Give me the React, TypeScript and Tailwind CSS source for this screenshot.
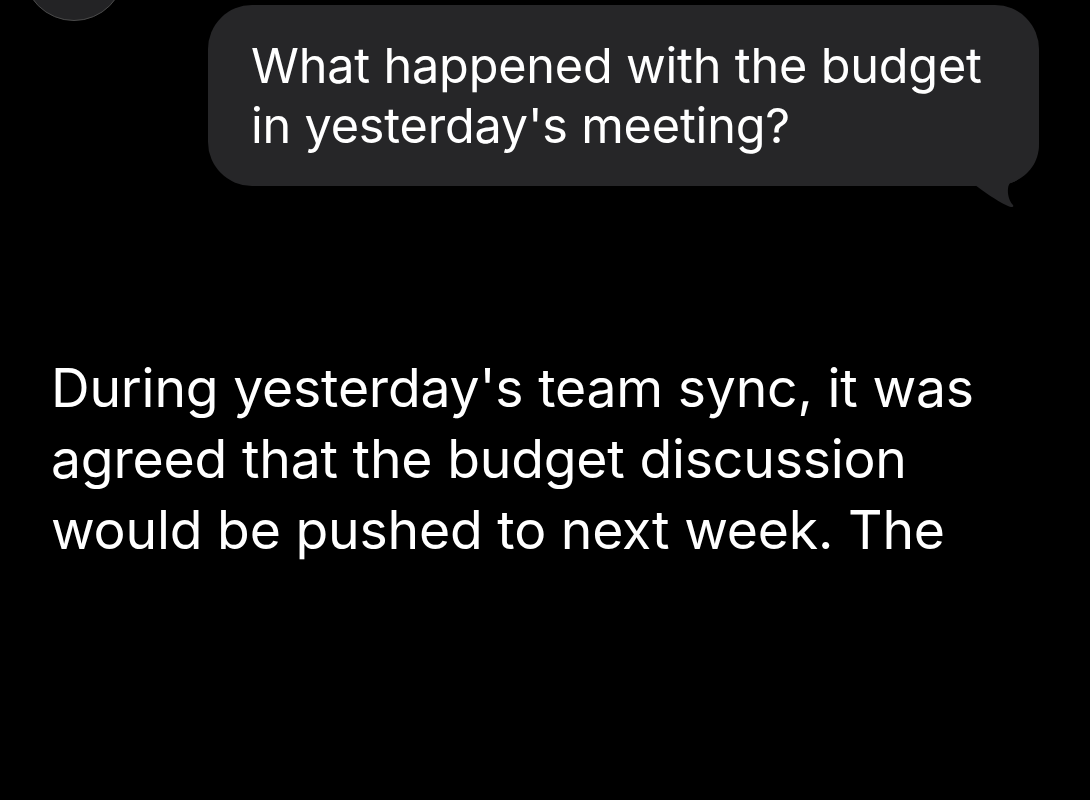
export default function App() {
  return (
    <div
      className="relative h-[800px] w-full overflow-hidden bg-black text-white"
      style={{ fontFamily: 'Inter, "Noto Sans", "Liberation Sans", sans-serif' }}
    >
      {/* scrolled-off avatar */}
      <div className="absolute left-[23px] top-[-81px] h-[102px] w-[102px] rounded-full border border-[#4a4a4a] bg-[#232325]" />

      <div className="flex justify-end pr-[51px] pt-[5px]">
        <div className="relative w-[831px] rounded-[44px] bg-[#262628] pl-[43px] pr-[30px] pt-[31px] pb-[30px]">
          <p className="relative z-10 text-[48.6px] leading-[60px] tracking-[-0.2px]">
            What happened with the budget in yesterday's meeting?
          </p>
          <svg
            className="absolute left-[752px] top-[125px] h-[80px] w-[80px]"
            viewBox="0 0 80 80"
          >
            <path
              d="M 79 0 L 79 14 C 79 36, 64 49, 50 53 C 46 58, 48 70, 53 75 C 54 77, 52 78, 48 76 C 35 70, 25 62, 15 55 L 0 55 L 0 0 Z"
              fill="#262628"
            />
          </svg>
        </div>
      </div>

      <div className="px-[51px] pt-[166px]">
        <p className="text-[53.5px] leading-[71px] tracking-[-0.2px]">
          During yesterday's team sync, it was agreed that the budget discussion would be pushed to next week. The
        </p>
      </div>
    </div>
  );
}
